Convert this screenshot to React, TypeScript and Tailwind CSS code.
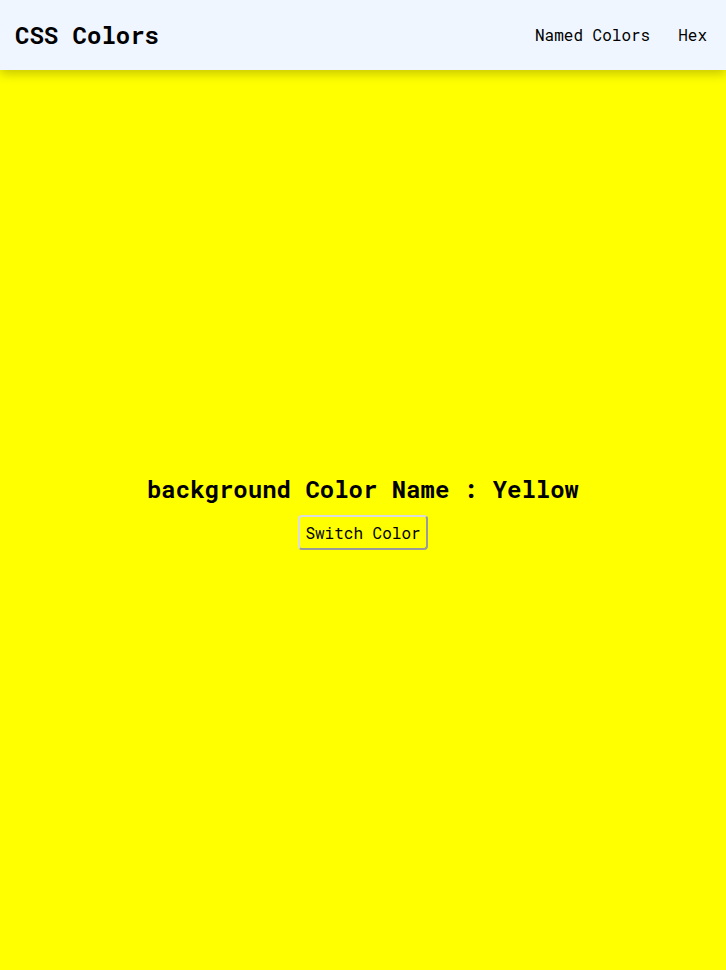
export default function App() {
  return (
    <div
      className="flex min-h-[970px] flex-col bg-[#ffff00] text-black"
      style={{ fontFamily: '"Roboto Mono", "DejaVu Sans Mono", monospace' }}
    >
      <header className="relative z-10 flex h-[70px] items-center justify-between bg-[#eff6ff] px-[15px] shadow-[0_4px_10px_rgba(0,0,0,0.22)]">
        <h1 className="text-[24px] font-bold leading-8">CSS Colors</h1>
        <nav className="flex items-center gap-[28px] pr-[4px] text-[16px] leading-6">
          <a href="#">Named Colors</a>
          <a href="#">Hex</a>
        </nav>
      </header>
      <main className="flex flex-1 flex-col items-center justify-center pb-[17px]">
        <h2 className="text-[24px] font-bold leading-8">background Color Name : Yellow</h2>
        <button className="mt-[10px] h-[35px] rounded-[4px] border-2 border-t-[#dcdcdc] border-l-[#dcdcdc] border-b-[#9a9a9a] border-r-[#9a9a9a] px-[5px] text-[16px] leading-6">
          Switch Color
        </button>
      </main>
    </div>
  );
}
